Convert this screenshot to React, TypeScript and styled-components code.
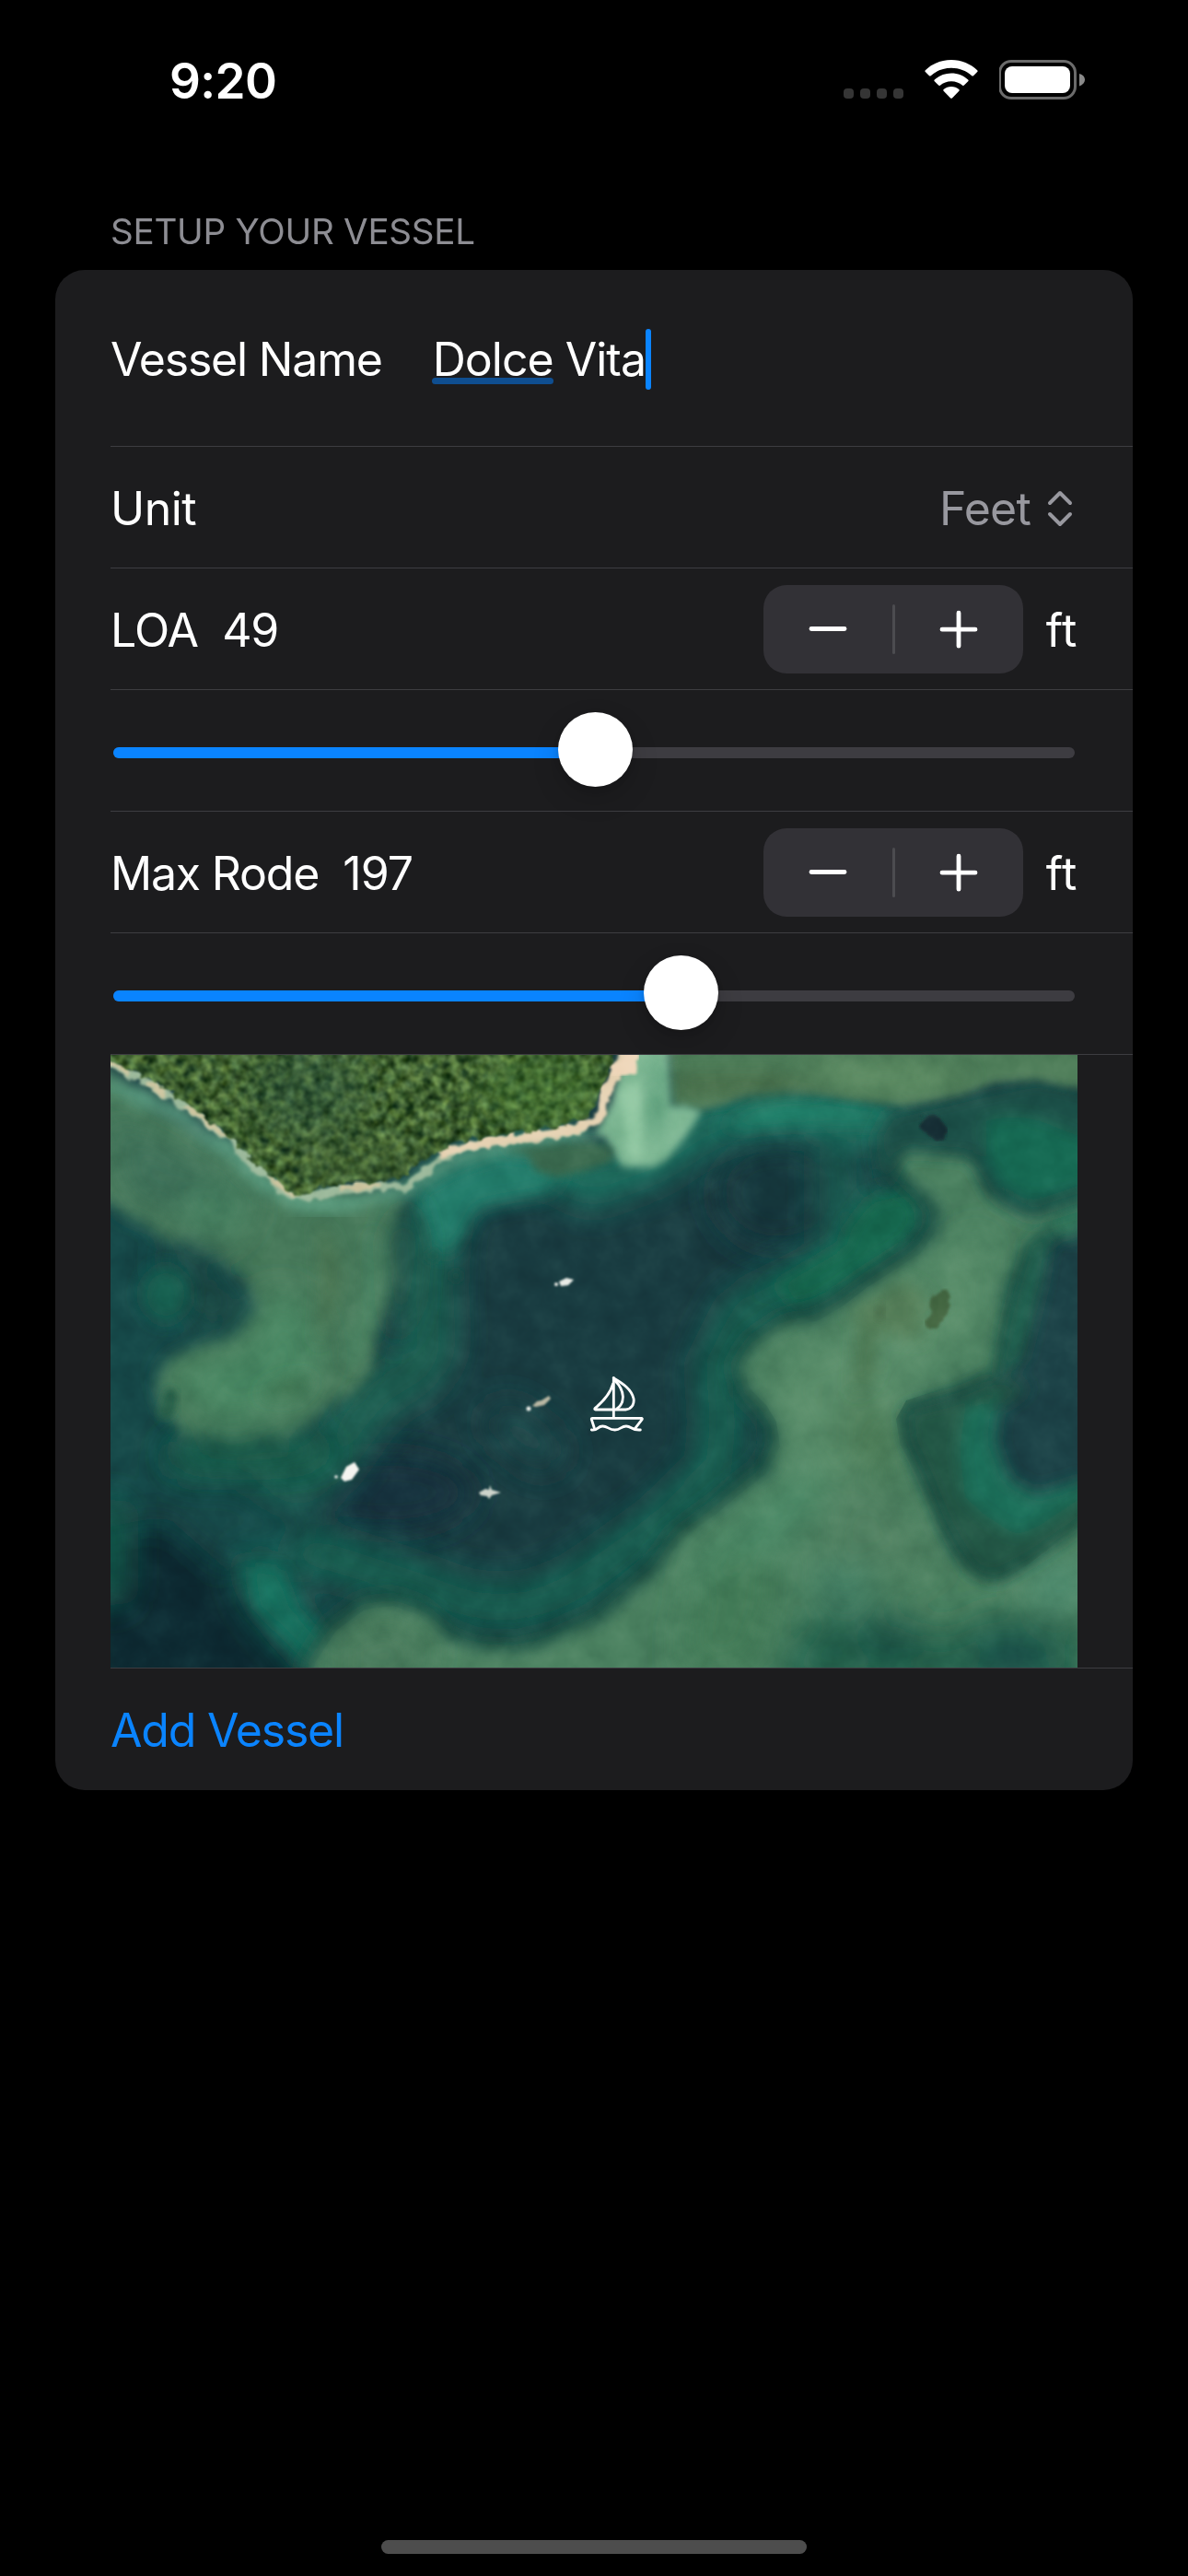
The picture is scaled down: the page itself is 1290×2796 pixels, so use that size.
import React from "react";
import styled, { createGlobalStyle } from "styled-components";

const GlobalStyle = createGlobalStyle`
  html, body { margin: 0; background: #000; }
  * { box-sizing: border-box; }
`;

const Screen = styled.main`
  width: 1290px;
  height: 2796px;
  background: #000;
  color: #fff;
  font-family: Inter, Roboto, "Liberation Sans", sans-serif;
  font-size: 50px;
  display: flex;
  flex-direction: column;
  overflow: hidden;
`;

const StatusBar = styled.header`
  height: 177px;
  padding: 65px 111px 0 184px;
  display: flex;
  justify-content: space-between;
  align-items: flex-start;
`;

const Clock = styled.time`
  padding-top: 2px;
  font-size: 53px;
  line-height: 43px;
  font-weight: 600;
  letter-spacing: -0.6px;
`;

const StatusIcons = styled.div`
  display: flex;
  gap: 23px;
`;

const SignalDots = styled.div`
  display: flex;
  gap: 7px;
  padding-top: 31px;
`;

const SignalDot = styled.span`
  width: 11px;
  height: 11px;
  border-radius: 4px;
  background: #353535;
`;

const SectionTitle = styled.h1`
  margin: 0;
  height: 116px;
  padding: 50px 0 0 120px;
  font-size: 38.6px;
  line-height: 48px;
  font-weight: 400;
  letter-spacing: -0.25px;
  color: #8d8d93;
`;

const Card = styled.section`
  margin: 0 60px;
  padding-left: 60px;
  border-radius: 32px;
  background: #1c1c1e;
  overflow: hidden;
`;

const Row = styled.div<{ $height?: number; $last?: boolean }>`
  height: ${(p) => p.$height ?? 132}px;
  padding: 2px 60px 0 0;
  display: flex;
  align-items: center;
  white-space: pre;
  border-bottom: ${(p) => (p.$last ? "0" : "1px solid #3d3d41")};
`;

const MapRow = styled(Row)`
  padding: 0;
  align-items: stretch;
`;

const Label = styled.span<{ $spacing?: number }>`
  letter-spacing: ${(p) => p.$spacing ?? -1.2}px;
`;

const Value = styled(Label)`
  margin-left: 26px;
`;

const NameField = styled.div`
  margin-left: 55px;
  display: flex;
  align-items: center;
`;

const Suggested = styled.span`
  position: relative;
  letter-spacing: -1px;
  &::after {
    content: "";
    position: absolute;
    left: -1px;
    right: 0;
    bottom: 3px;
    height: 7px;
    border-radius: 4px;
    background: #0f4e90;
  }
`;

const Caret = styled.span`
  width: 6px;
  height: 66px;
  border-radius: 3px;
  background: #0a84ff;
`;

const Picker = styled.div`
  margin-left: auto;
  display: flex;
  align-items: center;
  gap: 18px;
  color: #98989f;
  padding-right: 5px;
`;

const StepperBox = styled.div`
  margin-left: auto;
  width: 282px;
  height: 96px;
  margin-top: -1px;
  border-radius: 25px;
  background: #323136;
  display: grid;
  grid-template-columns: 1fr 3px 1fr;
  align-items: center;
  justify-items: center;
`;

const StepperDivider = styled.span`
  width: 3px;
  height: 54px;
  border-radius: 2px;
  background: #4c4c50;
`;

const UnitText = styled.span`
  width: 59px;
  text-align: right;
  letter-spacing: 0.6px;
`;

const Track = styled.div`
  position: relative;
  width: 1044px;
  height: 12px;
  margin: 2px 0 0 3px;
  border-radius: 6px;
  background: #3d3c41;
`;

const Fill = styled.div`
  height: 12px;
  border-radius: 6px;
  background: #0a84ff;
`;

const Thumb = styled.div`
  position: absolute;
  top: -38px;
  width: 81px;
  height: 81px;
  margin-left: -40.5px;
  border-radius: 50%;
  background: #fff;
  box-shadow: 0 12px 30px rgba(0, 0, 0, 0.16), 0 2px 6px rgba(0, 0, 0, 0.12);
`;

const AddButton = styled.button`
  border: 0;
  padding: 0;
  background: none;
  color: #0a84ff;
  font: inherit;
  letter-spacing: -1.2px;
`;

const HomeBar = styled.div`
  width: 462px;
  height: 15px;
  border-radius: 8px;
  background: #4d4d4d;
  margin: auto auto 24px;
`;

function WifiIcon() {
  return (
    <svg width="58" height="43" viewBox="0 0 58 43" fill="#fff">
      <path d="M29 0C40 0 50 4.300 57.200 11.300q.8.800 0 1.700L53 17.200q-.8.800-1.700 0C45 11.600 37.400 8.700 29 8.700S13 11.600 6.700 17.200q-.9.800-1.700 0L.8 13q-.8-.9 0-1.700C8 4.300 18 0 29 0z" />
      <path d="M29 14.600c7 0 13.300 2.600 18.200 7q.9.800 0 1.700l-4.300 4.300q-.8.800-1.700.1C37.800 24.900 33.600 23.200 29 23.200s-8.800 1.700-12.200 4.500q-.9.700-1.700-.1l-4.300-4.300q-.9-.9 0-1.700c4.900-4.400 11.200-7 18.200-7z" />
      <path d="M29 29c3.200 0 6.100 1.100 8.300 3q.9.800.1 1.700l-7.500 7.700q-.9.900-1.800 0l-7.500-7.700q-.8-.9.100-1.700c2.200-1.900 5.100-3 8.300-3z" />
    </svg>
  );
}

function BatteryIcon() {
  return (
    <svg width="94" height="43" viewBox="0 0 94 43">
      <rect x="0.500" y="1.500" width="82" height="40" rx="12.500" fill="none" stroke="#6b6b6b" strokeWidth="3" />
      <rect x="6" y="7" width="71" height="29" rx="8" fill="#fff" />
      <path d="M87 15c8 2 8 11 0 13.500z" fill="#8a8a8a" />
    </svg>
  );
}

function Stepper() {
  return (
    <StepperBox>
      <svg width="42" height="42" viewBox="0 0 42 42" stroke="#fff" strokeWidth="4.800" strokeLinecap="round">
        <path d="M3 20.500H39" />
      </svg>
      <StepperDivider />
      <svg width="42" height="42" viewBox="0 0 42 42" stroke="#fff" strokeWidth="4.800" strokeLinecap="round">
        <path d="M3 21.200H39M21 3.200V39.200" />
      </svg>
    </StepperBox>
  );
}

function Slider({ percent }: { percent: number }) {
  return (
    <Track>
      <Fill style={{ width: `${percent}%` }} />
      <Thumb style={{ left: `${percent}%` }} />
    </Track>
  );
}

const FOREST =
  "M-20 -20L-5 4 31 20 59 35 74 48 100 65 128 88 145 108 169 125 186 142 200 152 217 148 248 140 283 138 314 135 334 118 360 102 396 90 438 85 482 78 513 70 528 55 531 40 538 22 546 8 548 -20z";
const REEF =
  "M217 690L222 660 245 625 276 602 307 598 334 608 362 632 396 645 438 648 479 638 530 615 566 585 597 558 620 525 658 498 685 475 711 455 727 425 723 398 712 380 694 362 688 338 700 318 734 295 769 288 796 272 822 252 849 235 880 215 895 192 899 172 887 148 868 132 853 115 857 98 887 92 922 98 937 118 952 145 979 165 1014 152 1070 130 1070 165 1017 185 991 212 975 248 968 292 956 338 940 352 903 362 864 375 853 395 857 422 876 458 895 502 914 542 941 568 972 568 998 552 1029 528 1070 490 1070 700z";

function SatelliteMap() {
  return (
    <svg width="1050" height="665" viewBox="0 0 1050 665">
      <defs>
        <filter id="soft4" x="-20%" y="-20%" width="140%" height="140%"><feGaussianBlur stdDeviation="4" /></filter>
        <filter id="soft8" x="-40%" y="-40%" width="180%" height="180%"><feGaussianBlur stdDeviation="9" /></filter>
        <filter id="soft18" x="-60%" y="-60%" width="220%" height="220%"><feGaussianBlur stdDeviation="18" /></filter>
        <filter id="soft1"><feGaussianBlur stdDeviation="0.9" /></filter>
        <filter id="ragged" x="-5%" y="-10%" width="110%" height="120%">
          <feTurbulence type="fractalNoise" baseFrequency="0.08" numOctaves="2" seed="4" result="n" />
          <feDisplacementMap in="SourceGraphic" in2="n" scale="14" xChannelSelector="R" yChannelSelector="G" />
          <feGaussianBlur stdDeviation="1.400" />
        </filter>
        <filter id="shoal" x="-5%" y="-10%" width="110%" height="120%">
          <feTurbulence type="fractalNoise" baseFrequency="0.025" numOctaves="3" seed="9" result="n" />
          <feDisplacementMap in="SourceGraphic" in2="n" scale="16" xChannelSelector="R" yChannelSelector="G" />
          <feGaussianBlur stdDeviation="7.500" />
        </filter>
        <filter id="canopy" x="-5%" y="-10%" width="110%" height="120%" colorInterpolationFilters="sRGB">
          <feTurbulence type="fractalNoise" baseFrequency="0.1" numOctaves="3" seed="12" result="t" />
          <feColorMatrix in="t" type="matrix" values="0.620 0.120 0 0 -0.120  0.700 0.080 0 0 -0.010  0.450 0 0.100 0 -0.085  0 0 0 0 1" result="leaves" />
          <feTurbulence type="fractalNoise" baseFrequency="0.09" numOctaves="2" seed="4" result="n" />
          <feDisplacementMap in="SourceGraphic" in2="n" scale="14" xChannelSelector="R" yChannelSelector="G" result="shape" />
          <feComposite in="leaves" in2="shape" operator="in" />
          <feGaussianBlur stdDeviation="1.100" />
        </filter>
        <filter id="grain" x="0" y="0" width="100%" height="100%" colorInterpolationFilters="sRGB">
          <feTurbulence type="fractalNoise" baseFrequency="0.03" numOctaves="4" seed="21" />
          <feColorMatrix type="matrix" values="1.300 0 0 0 -0.150  1.300 0 0 0 -0.150  1.100 0 0 0 -0.050  0 0 0 0 1" />
        </filter>
        <clipPath id="reefClip"><path d={REEF} /></clipPath>
        <clipPath id="forestClip"><path d={FOREST} /></clipPath>
      </defs>

      <rect width="1050" height="665" fill="#193c41" />

      {/* deep water tones */}
      <g filter="url(#soft18)">
        <path d="M-40 140H120L250 400 230 560H-40z" fill="#14484a" />
        <path d="M-40 520L60 500 150 580 220 660 220 710H-40z" fill="#0d2932" />
        <ellipse cx="300" cy="475" rx="95" ry="42" fill="#16333c" />
        <ellipse cx="725" cy="150" rx="70" ry="60" fill="#16393d" />
        <path d="M960 180L1080 150V500L1000 520 925 450 925 385 965 330z" fill="#1b4347" />
      </g>

      {/* mid-depth teal fringes */}
      <g filter="url(#soft18)" fill="none" strokeLinecap="round" strokeLinejoin="round">
        <path d="M345 160Q380 130 430 118T520 140L590 115 650 75 720 58 800 66 850 80" stroke="#1b7160" strokeWidth="52" />
        <path d="M350 170Q340 240 345 290T318 350 250 420 180 450" stroke="#1a6252" strokeWidth="58" />
        <path d="M230 440Q130 440 80 440" stroke="#17594a" strokeWidth="40" />
        <path d="M160 560L180 600 225 650" stroke="#17705c" strokeWidth="42" />
        <path d="M220 540Q290 560 370 590T530 560L600 510 660 450 665 400 660 340 690 280 770 240 850 170" stroke="#186151" strokeWidth="52" />
        <path d="M790 110V190" stroke="#1b5f52" strokeWidth="40" />
        <path d="M0 500V580" stroke="#17604e" strokeWidth="35" />
        <path d="M430 400L470 430" stroke="#1d4748" strokeWidth="50" />
      </g>
      <g filter="url(#soft8)">
        <path d="M332 150Q360 130 420 108L500 120 480 150 400 165 372 215 350 215z" fill="#217b6a" />
        <path d="M660 80Q700 50 740 50T840 60L850 75Q760 72 700 80z" fill="#23816a" />
        <path d="M866 145Q890 165 875 190T800 250 735 265 700 262 745 235 800 200 825 155z" fill="#17694f" />
        <path d="M150 555L185 560 200 600 235 640 225 665 185 625 158 600z" fill="#18715f" />
      </g>

      {/* western shoal */}
      <g filter="url(#shoal)">
        <path d="M-20 10L200 150 320 146 312 185 310 250 298 290 283 335 268 368 231 390 183 417 128 422 76 408 55 382 52 358 62 338 93 315 145 302 162 275 155 252 128 225 93 205 59 198 24 178 -20 150z" fill="#47795a" />
      </g>
      <g filter="url(#soft18)">
        <path d="M-10 60L90 110 160 150 110 180 20 160z" fill="#3c7058" />
        <path d="M60 345L150 320 175 255 210 270 230 330 200 380 120 400z" fill="#4a8864" />
        <ellipse cx="112" cy="170" rx="35" ry="28" fill="#488463" />
        <path d="M320 150L330 200 325 270 308 325 305 200z" fill="#23574a" />
        <ellipse cx="150" cy="430" rx="90" ry="14" fill="#1f5d49" />
        <ellipse cx="85" cy="225" rx="34" ry="18" fill="#19433f" />
        <ellipse cx="110" cy="270" rx="26" ry="26" fill="#1a4a42" />
      </g>
      <g filter="url(#soft8)">
        <ellipse cx="60" cy="260" rx="26" ry="30" fill="#175f4f" />
        <path d="M285 190Q300 240 280 290L268 340 255 330 275 270z" fill="#4f8c69" />
        <path d="M160 370Q190 345 220 352L200 372z" fill="#3c7250" />
        <path d="M225 180Q260 220 240 280L225 320 230 250z" fill="#4b7551" />
      </g>
      <path d="M60 362Q75 360 72 378T58 395 54 380z" fill="#245a45" filter="url(#soft4)" />
      <circle cx="375" cy="240" r="7" fill="#195047" filter="url(#soft4)" />
      <circle cx="350" cy="218" r="7" fill="#1c5d50" filter="url(#soft4)" />

      {/* eastern reef */}
      <path d={REEF} fill="none" stroke="#1d5345" strokeWidth="30" filter="url(#soft8)" />
      <path d={REEF} fill="#4b8160" filter="url(#shoal)" />
      <g clipPath="url(#reefClip)">
        <g filter="url(#soft18)">
          <path d="M710 345L800 300 860 260 950 190 945 300 880 345 850 430 780 470 745 420z" fill="#5a8e6b" />
          <path d="M640 540L760 450 780 470 700 560 620 640z" fill="#4e8c69" />
          <path d="M800 350L850 400 850 470 800 430z" fill="#4c7a55" />
          <path d="M790 460L850 470 900 560 830 560 760 550z" fill="#508060" />
          <path d="M630 590L680 530 730 570 700 670 620 670z" fill="#437a57" />
          <path d="M240 640L300 605 350 640 330 690 240 690z" fill="#47785a" />
          <path d="M715 690L750 615 800 602 860 606 900 634 960 604 1060 625 1060 690z" fill="#22614b" />
          <ellipse cx="845" cy="635" rx="38" ry="22" fill="#1f5144" />
          <ellipse cx="980" cy="655" rx="40" ry="22" fill="#1b504b" />
          <ellipse cx="1030" cy="575" rx="35" ry="32" fill="#508c70" />
          <ellipse cx="795" cy="575" rx="35" ry="20" fill="#46856a" />
        </g>
        <g filter="url(#soft8)">
          <path d="M812 290L832 300 828 350 808 370z" fill="#4a7550" />
          <path d="M800 280L860 245 885 260 880 310 830 300z" fill="#56805a" />
        </g>
      </g>

      {/* eastern lagoon */}
      <g filter="url(#soft8)">
        <path d="M862 385L920 370 955 355 1000 360 940 400 930 470 985 520 1070 455V500L1000 548 960 570 935 560 905 510 885 460 866 420z" fill="#225645" />
        <path d="M928 385L965 375 960 420 975 460 1005 478 1060 460 1055 480 1010 510 985 522 950 500 928 480 922 430z" fill="#1f705a" />
        <path d="M1000 200L1020 190 1010 250 990 330 965 355 975 290z" fill="#246350" />
        <path d="M1060 150L1030 165 1020 190 1050 200z" fill="#2d7458" />
      </g>

      {/* northern flats and channel */}
      <g filter="url(#soft8)">
        <path d="M845 62L930 42 1006 26 1070 40V155L1000 178 960 155 935 110 860 105 840 150 830 90z" fill="#1d514a" />
        <path d="M950 72Q990 60 1030 80L1070 95V135L1000 158 968 140 952 110z" fill="#186a52" />
      </g>
      <path d="M604 -20H1070V38L1035 34 1006 27 960 30 922 44 860 55 800 48 734 37 690 40 668 52 640 60 612 55z" fill="#4e7b58" filter="url(#soft4)" />
      <g filter="url(#soft8)">
        <path d="M740 10L860 5 940 20 880 42 800 38z" fill="#5b8a62" />
        <path d="M615 20L720 20 780 36 660 46 615 50z" fill="#486f4c" />
      </g>
      <path d="M880 68Q893 61 902 70T904 90Q892 94 884 82T880 68z" fill="#172f34" filter="url(#ragged)" />
      <path d="M896 260Q910 252 912 266L906 290Q894 302 886 290L888 276z" fill="#43653f" filter="url(#ragged)" />
      <path d="M830 280L840 268 838 290z" fill="#466a49" filter="url(#soft4)" />

      {/* pale sandbar */}
      <path d="M560 -20H606L608 56 624 54 642 62 628 84 604 114 590 122 556 122 546 108 536 88 524 88 545 50z" fill="#7fb894" filter="url(#soft4)" />
      <path d="M584 10L602 10 606 80 590 95 578 60z" fill="#5fa07d" filter="url(#soft8)" opacity="0.800" />
      <path d="M552 40L575 25 578 110 562 114z" fill="#92c8a3" filter="url(#soft4)" />

      {/* shoreline */}
      <g fill="none" strokeLinejoin="round">
        <path d="M-5 30L30 42 75 62 110 90 145 115 170 142 200 160 250 162 300 150 335 140 375 110 440 98 520 85" stroke="#5fa184" strokeWidth="15" filter="url(#shoal)" />
        <path d="M-5 8L35 26 62 42 100 68 130 92 150 115 172 132 192 152 212 154 250 147 290 143 322 142 345 124 375 105 410 95 460 90 515 80" stroke="#9dba9c" strokeWidth="9" filter="url(#ragged)" />
        <path d="M-5 6L20 18M40 30L62 42M84 58L128 88M172 130L200 154M250 145L292 142" stroke="#cfc7a2" strokeWidth="6" filter="url(#ragged)" />
        <path d="M360 108L400 96 450 90 500 82 522 74 535 60 537 40 550 18 560 -5" stroke="#e6d3b4" strokeWidth="11" filter="url(#ragged)" />
        <path d="M543 20L562 10 572 -8" stroke="#efd8bc" strokeWidth="16" filter="url(#ragged)" />
      </g>
      <path d="M424 104L470 98 520 94 545 100 545 116 515 126 485 133 462 126 452 108z" fill="#3b6a50" filter="url(#soft4)" />

      {/* forest */}
      <path d={FOREST} fill="#355b30" filter="url(#canopy)" />
      <g clipPath="url(#forestClip)" opacity="0.350">
        <g filter="url(#soft18)">
          <ellipse cx="215" cy="40" rx="60" ry="50" fill="#2c5546" />
          <ellipse cx="470" cy="40" rx="70" ry="45" fill="#4a8434" />
          <ellipse cx="270" cy="120" rx="80" ry="25" fill="#44643a" />
        </g>
      </g>

      <rect width="1050" height="665" filter="url(#grain)" opacity="0.160" style={{ mixBlendMode: "soft-light" }} />

      {/* anchored boats */}
      <g fill="#e8ebe6" filter="url(#soft1)">
        <path d="M487 246L495 242 503 244 497 250 489 251z" />
        <circle cx="484" cy="249" r="2" />
        <path d="M458 381L463 376 468 375 476 370 478 373 471 380 462 382z" fill="#b9b7a3" />
        <circle cx="454" cy="384" r="2.500" />
        <path d="M250 459L256 447 265 442 270 450 262 461 254 463z" fill="#f4f4f0" />
        <circle cx="245" cy="458" r="1.800" />
        <path d="M400 475L407 471 411 472 412 467 414 472 424 475 414 478 411 482 409 479 402 478z" fill="#cdd3cb" />
      </g>

      {/* own vessel */}
      <g transform="translate(480 325) scale(0.3333)" fill="none" stroke="#fff" strokeWidth="8.500" strokeLinecap="round" strokeLinejoin="round">
        <path d="M199 76V205" />
        <path d="M197 96C188 128 162 156 138 176Q136 180 140 180H238C258 178 267 162 264 144C257 114 230 96 201 79" />
        <path d="M204 86C236 118 237 158 210 177" />
        <path d="M136 240L127 212Q126 208 130 208H289Q294 208 291 213L269 241" />
        <path d="M127 246C149 249 145 234 163 234C181 234 182 246 203 246C223 246 222 234 240 234C258 234 256 248 286 246" />
      </g>
    </svg>
  );
}

export default function App() {
  return (
    <>
      <GlobalStyle />
      <Screen>
        <StatusBar>
          <Clock>9:20</Clock>
          <StatusIcons>
            <SignalDots>
              {[0, 1, 2, 3].map((i) => (
                <SignalDot key={i} />
              ))}
            </SignalDots>
            <WifiIcon />
            <BatteryIcon />
          </StatusIcons>
        </StatusBar>
        <SectionTitle>SETUP YOUR VESSEL</SectionTitle>
        <Card>
          <Row $height={192}>
            <Label>Vessel Name</Label>
            <NameField>
              <Suggested>Dolce</Suggested>
              <Label $spacing={-1}> Vita</Label>
              <Caret />
            </NameField>
          </Row>
          <Row>
            <Label $spacing={-0.5}>Unit</Label>
            <Picker>
              <Label $spacing={-0.8}>Feet</Label>
              <svg width="28" height="40" viewBox="0 0 28 40" fill="none" stroke="#98989f" strokeWidth="4" strokeLinecap="round" strokeLinejoin="round">
                <path d="M3 14L14 3 25 14M3 26L14 37 25 26" />
              </svg>
            </Picker>
          </Row>
          <Row>
            <Label $spacing={-0.9}>LOA</Label>
            <Value $spacing={-1.2}>49</Value>
            <Stepper />
            <UnitText>ft</UnitText>
          </Row>
          <Row>
            <Slider percent={50.1} />
          </Row>
          <Row>
            <Label>Max Rode</Label>
            <Value $spacing={-0.9}>197</Value>
            <Stepper />
            <UnitText>ft</UnitText>
          </Row>
          <Row>
            <Slider percent={59.05} />
          </Row>
          <MapRow $height={666}>
            <SatelliteMap />
          </MapRow>
          <Row $last>
            <AddButton>Add Vessel</AddButton>
          </Row>
        </Card>
        <HomeBar />
      </Screen>
    </>
  );
}
